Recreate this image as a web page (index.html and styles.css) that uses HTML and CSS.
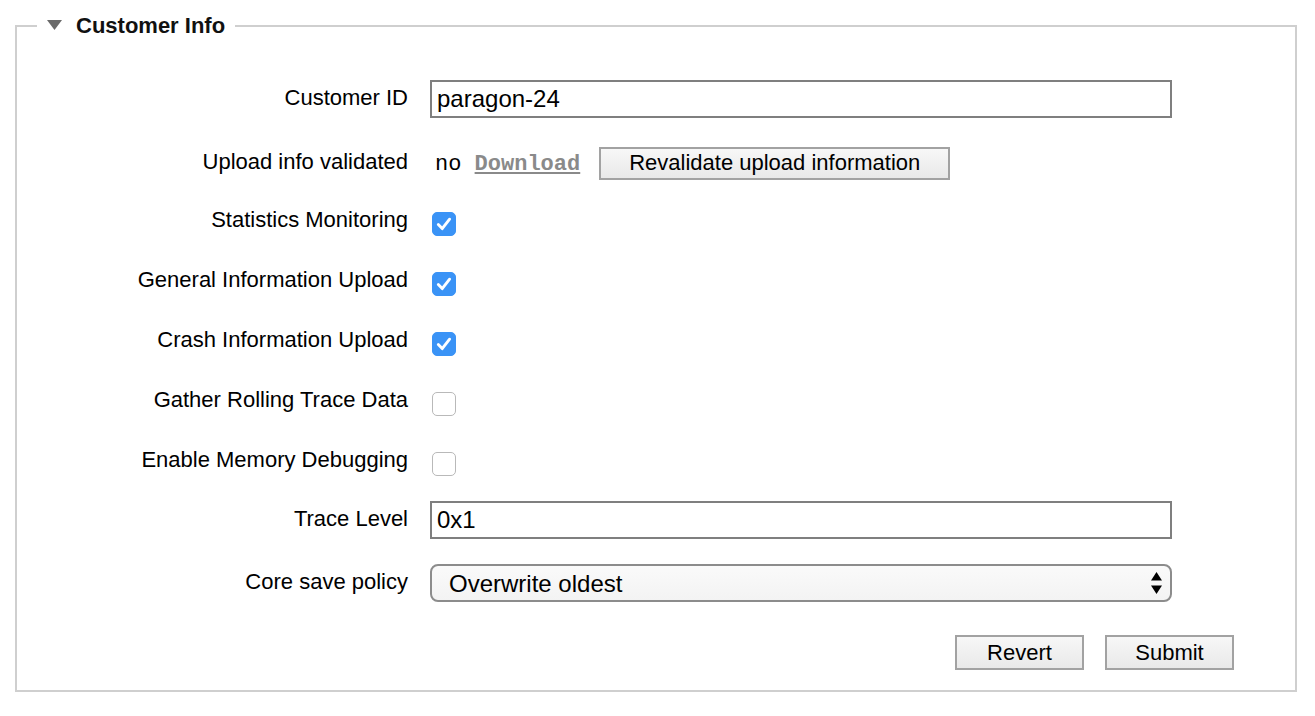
FILE: index.html
```html
<!DOCTYPE html>
<html lang="en">
<head>
<meta charset="utf-8">
<title>Customer Info</title>
<link rel="stylesheet" href="styles.css">
</head>
<body>
<div class="page">
  <fieldset class="panel">
    <legend class="legend">
      <svg class="disclosure" width="15" height="10" viewBox="0 0 15 10"><polygon points="0,0 15,0 7.5,10" fill="#6a6a6a"/></svg>
      <span class="legend-text">Customer Info</span>
    </legend>
    <div class="form">
      <div class="row row-first">
        <label class="label">Customer ID</label>
        <div class="control"><input class="text-input" type="text" value="paragon-24"></div>
      </div>
      <div class="row row-upload">
        <label class="label">Upload info validated</label>
        <div class="control">
          <span class="mono">no <a class="dl-link" href="#">Download</a></span>
          <button class="btn btn-wide" type="button">Revalidate upload information</button>
        </div>
      </div>
      <div class="row">
        <label class="label label-check">Statistics Monitoring</label>
        <div class="control"><span class="checkbox checked"><svg width="24" height="24" viewBox="0 0 24 24"><path d="M6.3 12.6 L10.2 16.6 L17.6 7.2" fill="none" stroke="#fff" stroke-width="2.9" stroke-linecap="round" stroke-linejoin="round"/></svg></span></div>
      </div>
      <div class="row">
        <label class="label label-check">General Information Upload</label>
        <div class="control"><span class="checkbox checked"><svg width="24" height="24" viewBox="0 0 24 24"><path d="M6.3 12.6 L10.2 16.6 L17.6 7.2" fill="none" stroke="#fff" stroke-width="2.9" stroke-linecap="round" stroke-linejoin="round"/></svg></span></div>
      </div>
      <div class="row">
        <label class="label label-check">Crash Information Upload</label>
        <div class="control"><span class="checkbox checked"><svg width="24" height="24" viewBox="0 0 24 24"><path d="M6.3 12.6 L10.2 16.6 L17.6 7.2" fill="none" stroke="#fff" stroke-width="2.9" stroke-linecap="round" stroke-linejoin="round"/></svg></span></div>
      </div>
      <div class="row">
        <label class="label label-check">Gather Rolling Trace Data</label>
        <div class="control"><span class="checkbox"></span></div>
      </div>
      <div class="row">
        <label class="label label-check">Enable Memory Debugging</label>
        <div class="control"><span class="checkbox"></span></div>
      </div>
      <div class="row row-trace">
        <label class="label">Trace Level</label>
        <div class="control"><input class="text-input" type="text" value="0x1"></div>
      </div>
      <div class="row row-core">
        <label class="label">Core save policy</label>
        <div class="control">
          <div class="select-wrap">
            <select class="select"><option>Overwrite oldest</option></select>
            <svg class="select-arrows" width="11" height="22" viewBox="0 0 11 22"><polygon points="5.5,0 11,8.5 0,8.5" fill="#000"/><polygon points="0,13.5 11,13.5 5.5,22" fill="#000"/></svg>
          </div>
        </div>
      </div>
      <div class="actions">
        <button class="btn btn-action" type="button">Revert</button>
        <button class="btn btn-action" type="button">Submit</button>
      </div>
    </div>
  </fieldset>
</div>
</body>
</html>
```

FILE: styles.css
```css
html, body {
  margin: 0;
  padding: 0;
  background: #fff;
}
body {
  font-family: "Liberation Sans", Arial, Helvetica, sans-serif;
  font-size: 22px;
  color: #000;
}
.page {
  padding: 13px 18px 0 15px;
}
.panel {
  margin: 0;
  border: 2px solid #cfcfcf;
  padding: 0 0 20px 0;
  min-width: 0;
}
.legend {
  margin-left: 20px;
  padding: 0 10px;
  height: 26px;
  line-height: 26px;
  display: flex;
  align-items: center;
}
.disclosure {
  display: block;
  margin-right: 14px;
  margin-top: -2px;
}
.legend-text {
  font-weight: bold;
  font-size: 22px;
  color: #111;
}
.form {
  display: flex;
  flex-direction: column;
  padding-top: 30px;
}
.row {
  display: grid;
  grid-template-columns: 391px 1fr;
  column-gap: 22px;
  height: 60px;
  align-items: center;
}
.row-upload { margin-top: 4px; }
.row-trace { margin-top: -3px; }
.row-core { margin-top: 3px; }
.label {
  text-align: right;
  line-height: 26px;
  padding-bottom: 2px;
}
.label-check {
  padding-bottom: 7px;
}
.control {
  display: flex;
  align-items: center;
}
.text-input {
  box-sizing: border-box;
  width: 742px;
  height: 38px;
  border: 2px solid #7f7f7f;
  padding: 0 5px;
  font-family: "Liberation Sans", Arial, sans-serif;
  font-size: 24px;
  color: #000;
  background: #fff;
  outline: none;
  margin: 0;
}
.mono {
  font-family: "Liberation Mono", "Courier New", monospace;
  font-size: 22px;
  margin-left: 5px;
  padding-top: 2px;
}
.dl-link {
  color: #8a8a8a;
  font-weight: bold;
  text-decoration: underline;
}
.btn {
  box-sizing: border-box;
  font-family: "Liberation Sans", Arial, sans-serif;
  font-size: 22px;
  color: #000;
  border: 2px solid #a2a2a2;
  border-radius: 0;
  background: linear-gradient(#f7f7f7, #e9e9e9);
  padding: 0;
  margin: 0;
}
.btn-wide {
  width: 351px;
  height: 33px;
  margin-left: 19px;
}
.checkbox {
  box-sizing: border-box;
  width: 24px;
  height: 24px;
  margin-left: 2px;
  margin-top: 1px;
  border-radius: 5px;
  border: 1.5px solid #b9b9b9;
  background: #fff;
  display: flex;
  align-items: center;
  justify-content: center;
}
.checkbox.checked {
  background: #3a93f6;
  border-color: #3a93f6;
}
.checkbox svg {
  display: block;
  flex: none;
}
.select-wrap {
  position: relative;
  width: 742px;
  height: 38px;
}
.select {
  -webkit-appearance: none;
  appearance: none;
  box-sizing: border-box;
  width: 742px;
  height: 38px;
  border: 2px solid #8c8c8c;
  border-radius: 8px;
  background: linear-gradient(#fafafa, #f3f3f3);
  padding: 0 0 0 17px;
  font-family: "Liberation Sans", Arial, sans-serif;
  font-size: 24px;
  color: #000;
  margin: 0;
  outline: none;
}
.select-arrows {
  position: absolute;
  right: 10px;
  top: 8px;
}
.actions {
  display: flex;
  justify-content: flex-end;
  gap: 21px;
  margin-top: 22px;
  padding-right: 61px;
}
.btn-action {
  width: 129px;
  height: 35px;
}
```
